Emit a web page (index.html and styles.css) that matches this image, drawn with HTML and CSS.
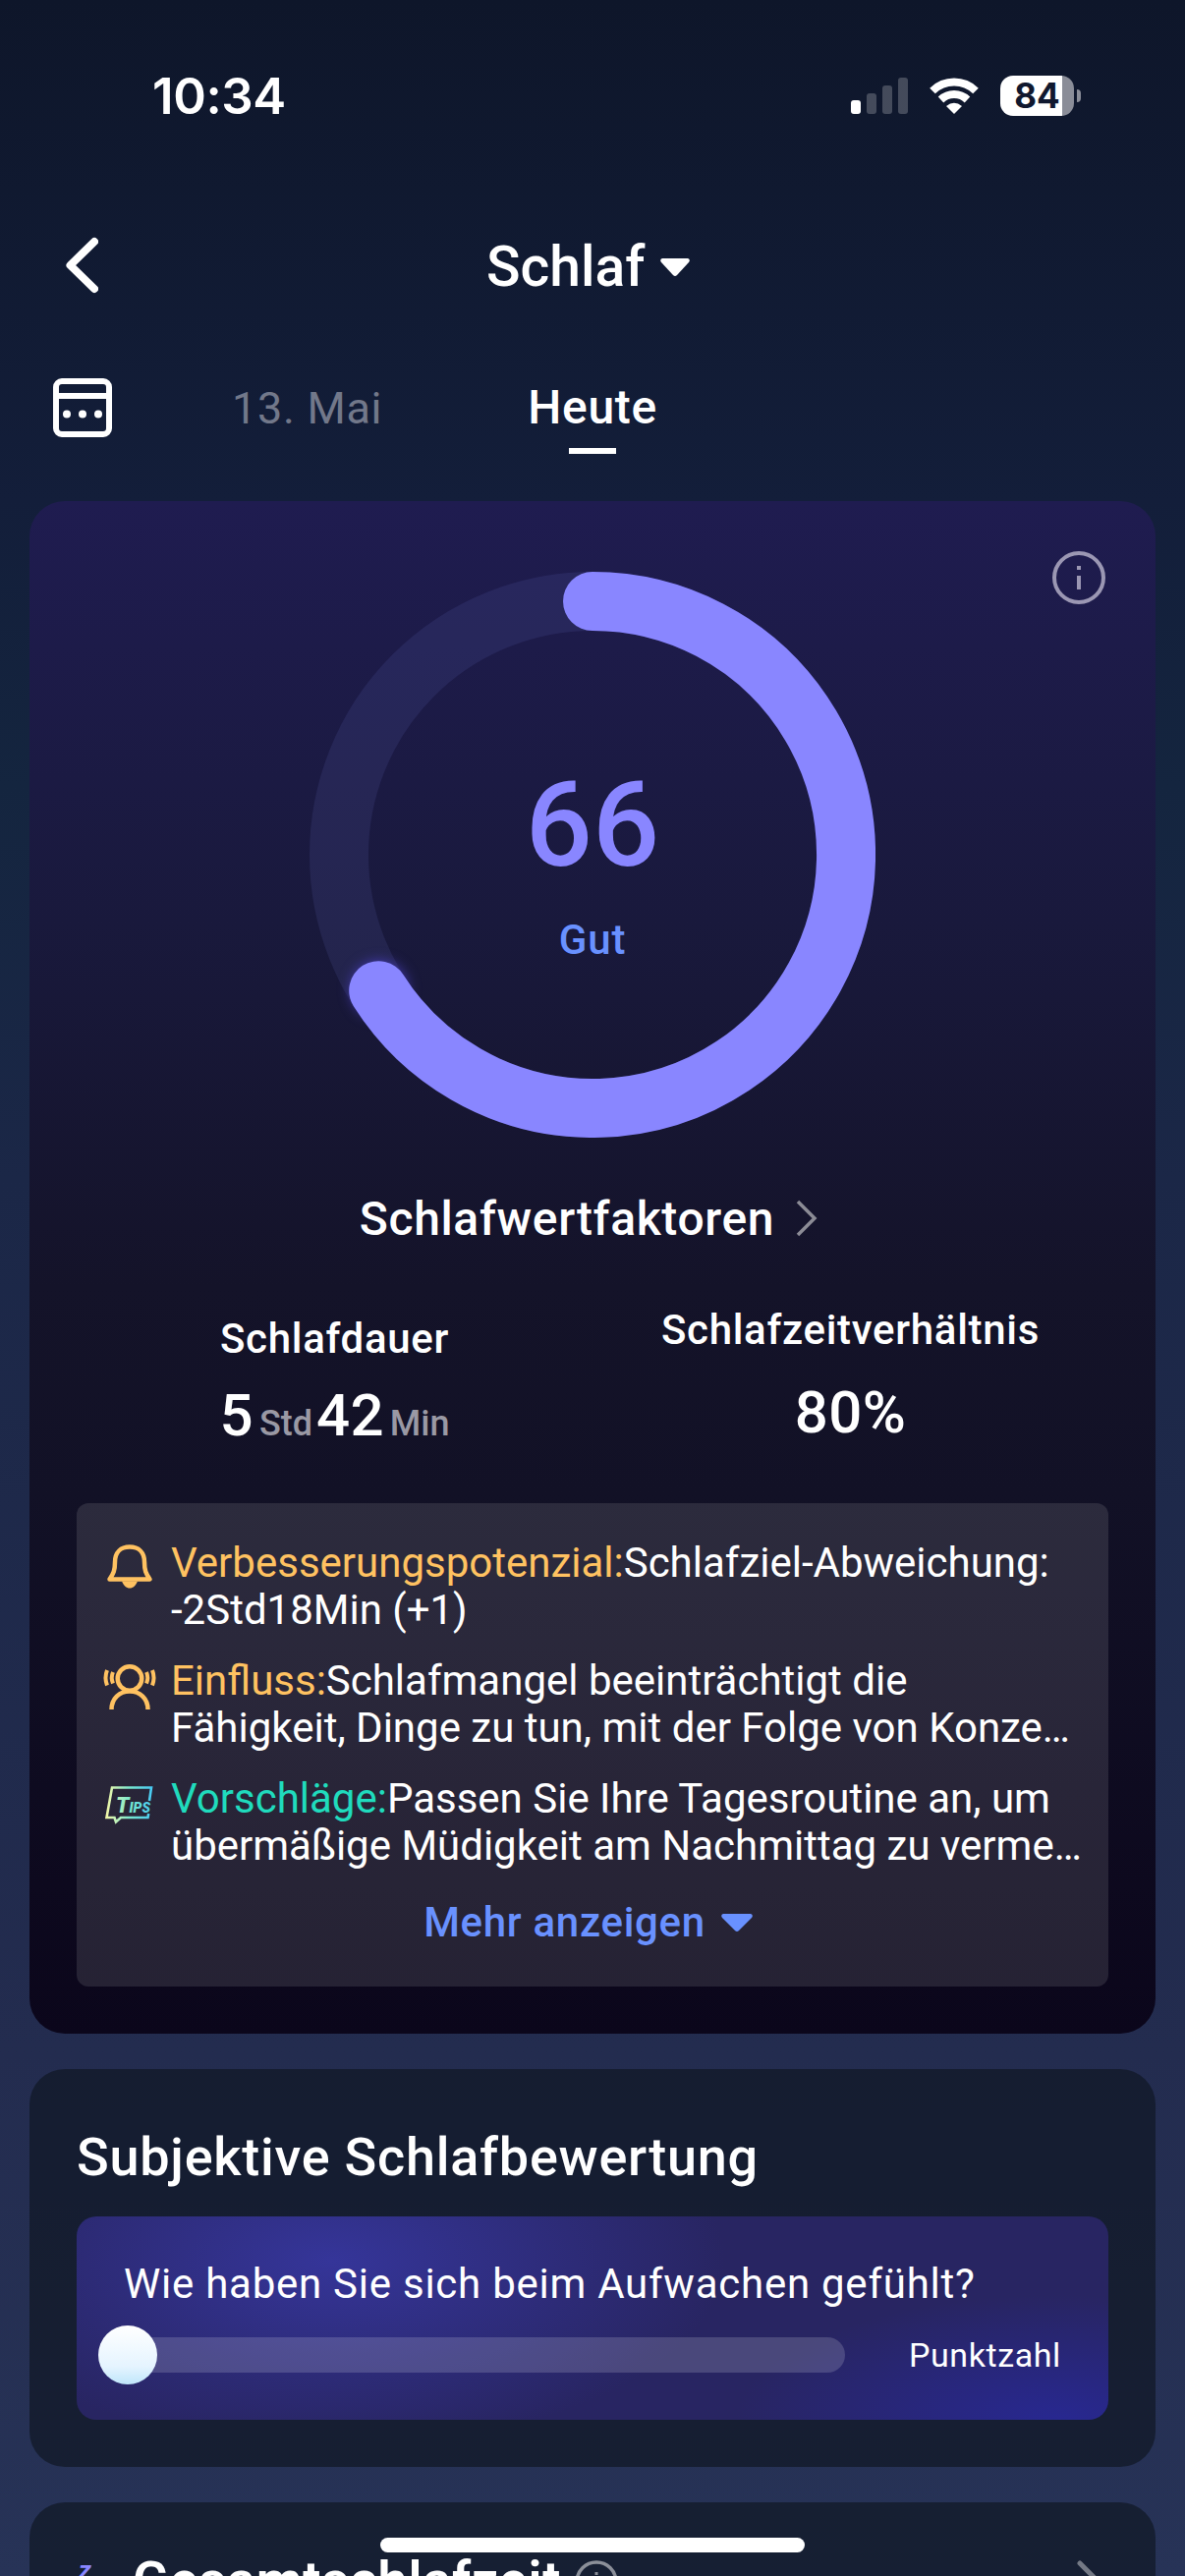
FILE: index.html
```html
<!DOCTYPE html>
<html lang="de">
<head>
<meta charset="utf-8">
<title>Schlaf</title>
<link rel="stylesheet" href="styles.css">
</head>
<body>
<div class="screen">
  <header class="status">
    <span class="clock">10:34</span>
    <div class="status-icons">
      <svg width="58" height="37" viewBox="0 0 58 37" fill="#fff"><rect y="23" width="10" height="14" rx="3"/><g opacity=".22"><rect x="16" y="16" width="10" height="21" rx="3"/><rect x="32" y="8" width="10" height="29" rx="3"/><rect x="48" width="10" height="37" rx="3"/></g></svg>
      <svg class="wifi" width="50" height="37" viewBox="0 0 50 37"><g fill="none" stroke="#fff" stroke-width="8"><path d="M3 13.5A31.500 31.500 0 0 1 47 13.500"/><path d="M11.500 22.500A19.500 19.500 0 0 1 38.500 22.500"/></g><path d="M25 37l-8-8q8-6.500 16 0z" fill="#fff"/></svg>
      <div class="battery"><div class="cell"><span>84</span></div><i></i></div>
    </div>
  </header>

  <nav class="titlebar">
    <svg class="back" width="34" height="58" viewBox="0 0 34 58"><path d="M30 5L5.500 29 30 53" fill="none" stroke="#fff" stroke-width="8" stroke-linecap="round" stroke-linejoin="round"/></svg>
    <h1>Schlaf</h1>
    <svg class="caret" width="30" height="19" viewBox="0 0 30 19"><path d="M2 0h26q3 1 1 4L17 17q-2 2-4 0L1 4q-2-3 1-4z" fill="#fff"/></svg>
  </nav>

  <div class="days">
    <svg class="calendar" width="60" height="60" viewBox="0 0 60 60"><g fill="none" stroke="#fff" stroke-width="6"><rect x="3" y="3" width="54" height="54" rx="6"/><path d="M3 18h54"/></g><g fill="#fff"><circle cx="14" cy="36.500" r="4"/><circle cx="30" cy="36.500" r="4"/><circle cx="46" cy="36.500" r="4"/></g></svg>
    <span class="day">13. Mai</span>
    <span class="day active">Heute</span>
  </div>

  <main>
    <section class="score-card">
      <svg class="info" width="56" height="56" viewBox="0 0 56 56"><circle cx="28" cy="28" r="25" fill="none" stroke="#9b97b3" stroke-width="4"/><path d="M28 26v14M28 16v4" stroke="#9b97b3" stroke-width="4"/></svg>
      <div class="ring">
        <svg width="576" height="576" viewBox="0 0 576 576"><circle cx="288" cy="288" r="258" fill="none" stroke="#8088ee" stroke-opacity=".11" stroke-width="60"/><circle class="glow" cx="71" cy="425" r="28" fill="#4a3fc0"/><path d="M288 30A258 258 0 1 1 70.200 426.200" fill="none" stroke="#8986ff" stroke-width="60" stroke-linecap="round"/></svg>
        <div class="ring-label"><b>66</b><span>Gut</span></div>
      </div>
      <div class="factors"><span>Schlafwertfaktoren</span><svg width="22" height="38" viewBox="0 0 22 38"><path d="M2 2l17 17L2 36" fill="none" stroke="#8c8c96" stroke-width="3.500"/></svg></div>
      <div class="metrics">
        <div class="metric duration"><h3>Schlafdauer</h3><p><b>5</b><small>Std</small><b>42</b><small>Min</small></p></div>
        <div class="metric ratio"><h3>Schlafzeitverhältnis</h3><p><b>80%</b></p></div>
      </div>
      <div class="advice">
        <div class="tip">
          <svg width="60" height="60" viewBox="0 0 60 60"><path d="M9.500 40.500c4-6 5.500-9 5.500-17.500 0-10 6-15.500 15-15.500S45 13 45 23c0 8.500 1.500 11.500 5.500 17.500z" fill="none" stroke="#ffc261" stroke-width="4.500" stroke-linejoin="round"/><path d="M22 42.500h16c-2 4.500-4.500 7-8 7s-6-2.500-8-7z" fill="#ffc261"/></svg>
          <p><em class="amber">Verbesserungspotenzial:</em>Schlafziel-Abweichung:<br>-2Std18Min (+1)</p>
        </div>
        <div class="tip">
          <svg width="60" height="60" viewBox="0 0 60 60" fill="none" stroke="#ffc261" stroke-width="4.500"><circle cx="30" cy="21.500" r="12.300"/><path d="M11.500 53c0-11 8-18.500 18.500-18.500S48.500 42 48.500 53"/><path d="M7 13q-3 7.500 0 15.500M13 15q-2.500 5.500 0 11.500M53 13q3 7.500 0 15.500M47 15q2.500 5.500 0 11.500" stroke-width="4"/></svg>
          <p><em class="amber">Einfluss:</em>Schlafmangel beeinträchtigt die<br>Fähigkeit, Dinge zu tun, mit der Folge von Konze…</p>
        </div>
        <div class="tip">
          <svg width="60" height="60" viewBox="0 0 60 60"><defs><linearGradient id="tips" gradientUnits="userSpaceOnUse" x1="6" y1="0" x2="54" y2="0"><stop offset="0" stop-color="#f4f8a8"/><stop offset=".5" stop-color="#79e8cf"/><stop offset="1" stop-color="#45c8f5"/></linearGradient></defs><path d="M50 26l2-13.500H12L6.500 43h8l1.500 4.500 5-4.500h27.500l.7-4" fill="none" stroke="url(#tips)" stroke-width="2.600"/><text x="16" y="37.700" fill="url(#tips)" class="tips-text"><tspan class="tips-big">T</tspan><tspan>IPS</tspan></text></svg>
          <p><em class="green">Vorschläge:</em>Passen Sie Ihre Tagesroutine an, um<br>übermäßige Müdigkeit am Nachmittag zu verme…</p>
        </div>
        <div class="more"><span>Mehr anzeigen</span><svg width="32" height="19" viewBox="0 0 32 19"><path d="M2 0h28q3 1 1 4L18 17q-2 2-4 0L1 4q-2-3 1-4z" fill="#6991ff"/></svg></div>
      </div>
    </section>

    <section class="card rating">
      <h2>Subjektive Schlafbewertung</h2>
      <div class="question">
        <p>Wie haben Sie sich beim Aufwachen gefühlt?</p>
        <div class="slider"><div class="track"><i class="knob"></i></div><span>Punktzahl</span></div>
      </div>
    </section>

    <section class="card total">
      <span class="zzz">z</span>
      <h2>Gesamtschlafzeit</h2>
      <svg width="44" height="44" viewBox="0 0 44 44"><circle cx="22" cy="22" r="20" fill="none" stroke="#8b8f99" stroke-width="3.500"/><path d="M22 12v3M22 19v13" stroke="#8b8f99" stroke-width="3"/></svg>
      <svg class="open" width="26" height="42" viewBox="0 0 26 42"><path d="M3 3l18 18L3 39" fill="none" stroke="#747985" stroke-width="5" stroke-linecap="round"/></svg>
    </section>
  </main>
  <div class="home-indicator"></div>
</div>
</body>
</html>
```

FILE: styles.css
```css
* { box-sizing: border-box; margin: 0; padding: 0; }
html, body { width: 1206px; height: 2622px; overflow: hidden; }
body { font-family: Roboto, "Liberation Sans", sans-serif; color: #fff; }
svg { display: block; flex: none; }
b, h1, h2, h3 { font-weight: 500; }
.screen { position: relative; height: 2622px; overflow: hidden; background: linear-gradient(#0e162a, #131e3a 510px, #14253f 800px, #1b2747 1200px, #232c4f 2090px, #273357 2622px); }

.status { height: 196px; padding: 77px 106px 0 155px; display: flex; justify-content: space-between; align-items: flex-start; }
.clock { font: 600 51px/42px Inter, sans-serif; letter-spacing: -.4px; }
.status-icons { display: flex; align-items: center; }
.wifi { margin: 0 22px; }
.battery { display: flex; align-items: center; gap: 3px; }
.cell { width: 75px; height: 41px; border-radius: 13px; background: linear-gradient(90deg, #fff 63px, #8a8d98 63px); text-align: center; }
.cell span { font: 700 35px/41px Inter, sans-serif; color: #10182f; }
.battery i { width: 4px; height: 13px; border-radius: 0 6px 6px 0; background: #8a8d98; }

.titlebar { height: 148px; display: flex; align-items: center; padding-left: 66px; }
.titlebar h1 { margin: 3px 0 0 395px; font-size: 57px; line-height: 66px; }
.caret { margin: 4px 0 0 16px; }

.days { height: 166px; display: flex; align-items: flex-start; padding: 41px 0 0 54px; }
.day { font-size: 45px; line-height: 62px; color: #72788a; margin-left: 122px; letter-spacing: .7px; }
.active { position: relative; color: #fff; font-size: 48px; line-height: 60px; font-weight: 500; margin-left: 148px; letter-spacing: .7px; }
.active::after { content: ""; position: absolute; left: 50%; top: 71px; width: 48px; height: 6px; margin-left: -24px; background: #fff; }

main { padding: 0 30px; display: flex; flex-direction: column; gap: 36px; }
.score-card { position: relative; height: 1560px; border-radius: 36px; padding: 72px 48px 48px; background: linear-gradient(#1f1c50, #19193c 430px, #141329 800px, #121126 1010px, #0b061b); }
.info { position: absolute; right: 50px; top: 50px; }
.ring { position: relative; width: 576px; height: 576px; margin: 0 auto; }
.glow { filter: blur(7px); }
.ring-label { position: absolute; inset: 0; display: flex; flex-direction: column; align-items: center; padding-top: 188px; color: #8986ff; }
.ring-label b { font-size: 120px; line-height: 140px; }
.ring-label span { font-size: 42px; line-height: 50px; color: #6991ff; margin-top: 22px; letter-spacing: .8px; font-weight: 500; }
.factors { height: 60px; margin-top: 52px; display: flex; justify-content: center; align-items: center; gap: 22px; padding-right: 8px; font-size: 48px; font-weight: 500; letter-spacing: .65px; }
.metrics { height: 260px; display: grid; grid-template-columns: 1fr 1fr; text-align: center; }
.metric { padding-top: 68px; }
.ratio { padding-top: 59px; }
.metric h3 { font-size: 42px; line-height: 50px; letter-spacing: .7px; }
.metric p { margin-top: 18px; font-size: 60px; line-height: 70px; }
.ratio p { margin-top: 24px; }
.metric b { letter-spacing: .3px; }
.metric small { font-size: 36px; font-weight: 500; color: #9a99a4; margin: 0 4px 0 6px; }
.metric small:last-child { margin-right: 0; }
.advice { height: 492px; border-radius: 12px; background: rgba(255, 255, 255, .11); padding: 37px 24px 0; }
.tip { height: 96px; margin-bottom: 24px; display: flex; gap: 12px; font-size: 42px; line-height: 48px; white-space: nowrap; }
em { font-style: normal; }
.amber { color: #ffc261; }
.green { color: #20dbbd; }
.tips-text { font: italic 900 14px Roboto, sans-serif; }
.tips-big { font-size: 22px; }
.more { display: flex; align-items: center; justify-content: center; gap: 16px; padding: 5px 9px 0 0; color: #6991ff; font-size: 42px; line-height: 50px; font-weight: 500; letter-spacing: .7px; }

.card { border-radius: 36px; background: rgba(16, 23, 35, .7); }
.rating { height: 405px; padding: 58px 48px 0; }
.card h2 { font-size: 54px; line-height: 64px; letter-spacing: .75px; }
.question { height: 207px; margin-top: 28px; border-radius: 20px; padding: 44px 48px 0; background: radial-gradient(ellipse 400px 190px at 260px 45px, #353599, rgba(53, 53, 153, 0)), radial-gradient(ellipse 330px 130px at 1000px 210px, #282891, rgba(40, 40, 145, 0)), #282562; }
.question p { font-size: 42px; line-height: 50px; letter-spacing: .75px; }
.slider { display: flex; align-items: center; justify-content: space-between; height: 36px; margin: 29px 0 0 -26px; font-size: 34px; letter-spacing: .6px; }
.track { position: relative; width: 760px; height: 36px; border-radius: 18px; background: rgba(255, 255, 255, .16); }
.knob { position: absolute; left: 0; top: -12px; width: 60px; height: 60px; border-radius: 50%; background: linear-gradient(#fff, #e5f4ff 70%, #bfe6fb); }
.total { height: 150px; display: flex; align-items: flex-start; padding: 48px 54px 0 50px; }
.total h2 { margin-left: 41px; font-weight: 600; }
.total svg { margin: 11px 0 0 14px; }
.total .open { margin-left: auto; }
.zzz { font: italic 700 26px/30px Roboto, sans-serif; color: #8986ff; width: 14px; margin-top: 6px; }
.home-indicator { position: absolute; left: 387px; top: 2583px; width: 432px; height: 15px; border-radius: 8px; background: #fff; }
```
